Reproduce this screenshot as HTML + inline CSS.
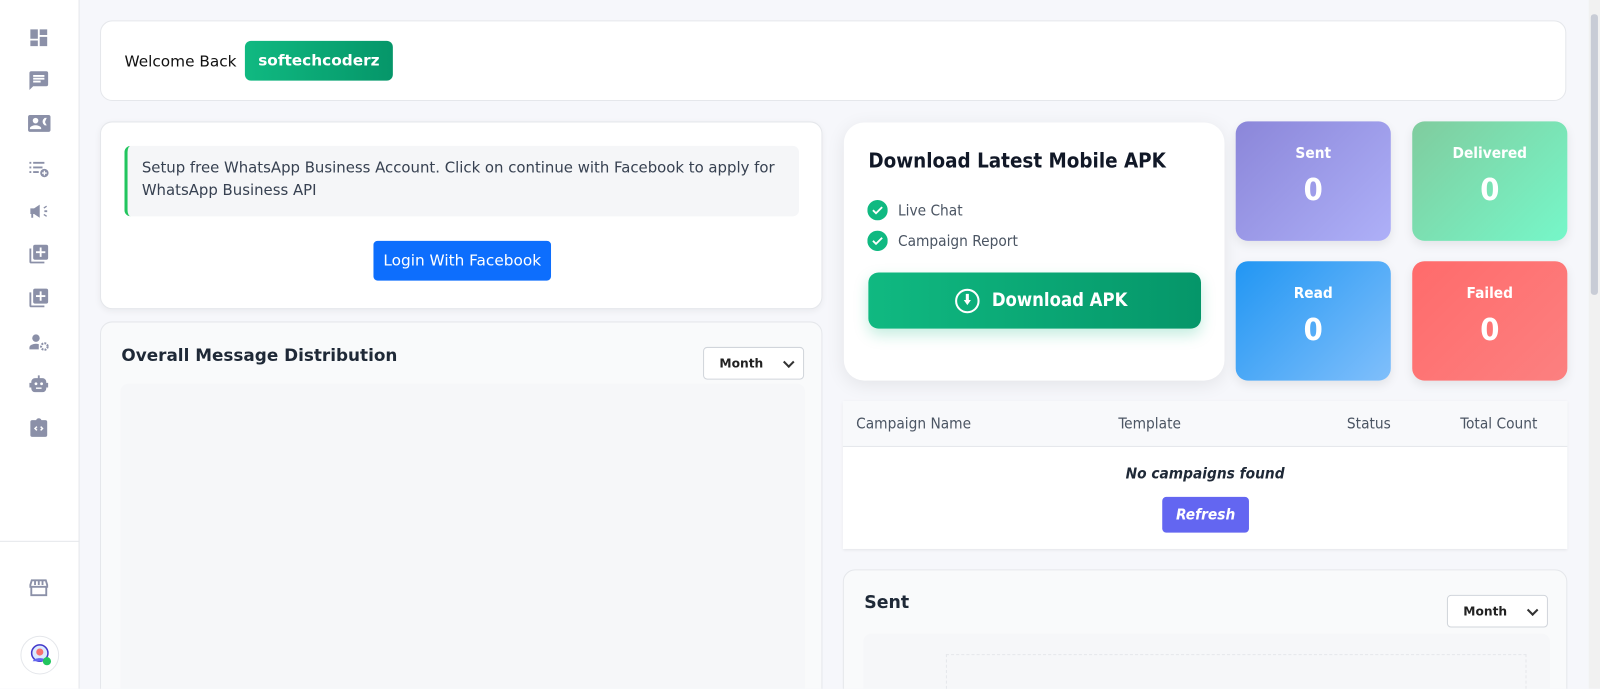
<!DOCTYPE html>
<html><head><style>
*{box-sizing:border-box;margin:0;padding:0}
html,body{width:1600px;height:689px;overflow:hidden}
body{background:#f6f7fb;font-family:"DejaVu Sans","Liberation Sans",sans-serif;color:#1f2937;position:relative}
#c{position:absolute;left:0;top:0;width:1600px;height:689px;overflow:hidden}
#w{position:absolute;left:0;top:0;width:1568px;height:675px;overflow:hidden;transform:scale(1.0204);transform-origin:0 0;background:#f6f7fb}
.abs{position:absolute}
.side{left:0;top:0;width:78px;height:675px;background:#fff;border-right:1px solid #e5e7eb}
.ic{position:absolute;left:27px;width:22px;height:22px}
.card{position:absolute;background:#fff;border:1px solid #e5e7eb;border-radius:12px}
.stat{position:absolute;width:152px;height:117px;border-radius:12px;color:#fff;text-align:center;font-family:"DejaVu Sans Condensed","Liberation Sans Narrow",sans-serif;box-shadow:0 4px 10px rgba(0,0,0,.08)}
.stat .t{margin-top:22px;font-size:15px;font-weight:bold}
.stat .n{margin-top:10px;font-size:30px;font-weight:bold}
.sel{position:absolute;width:99px;height:32px;border:1px solid #d1d5db;border-radius:4px;background:#fff;font-size:12px;font-weight:bold;padding:8px 15px;color:#222}
.sel:after{content:"";position:absolute;right:10px;top:10px;width:6px;height:6px;border-right:2px solid #333;border-bottom:2px solid #333;transform:rotate(45deg)}
</style></head><body><div id="c"><div id="w">
<div class="abs side">
<svg class="ic" style="top:26px" viewBox="0 0 24 24" fill="#8b90a8"><path d="M3 13h8V3H3zm0 8h8v-6H3zm10 0h8V11h-8zm0-18v6h8V3z"/></svg>
<svg class="ic" style="top:68px" viewBox="0 0 24 24" fill="#8b90a8"><path d="M20 2H4a2 2 0 0 0-2 2v18l4-4h14a2 2 0 0 0 2-2V4a2 2 0 0 0-2-2zM6 9h12v2H6zm8 5H6v-2h8zm4-6H6V6h12z"/></svg>
<svg class="ic" style="top:110px;left:26px;width:25px" viewBox="0 0 24 24" fill="#8b90a8"><path d="M22 3H2C.9 3 0 3.9 0 5v14c0 1.1.9 2 2 2h20c1.1 0 2-.9 2-2V5c0-1.1-.9-2-2-2zM8 6a3 3 0 1 1 0 6 3 3 0 0 1 0-6zm6 12H2v-1c0-2 4-3.1 6-3.1s6 1.1 6 3.1zm3.8-4-1.6-1.6a5 5 0 0 1 0-4.8L17.8 6H20l-1.6 3.5a3 3 0 0 0 0 1.8L20 14z"/></svg>
<svg class="ic" style="top:154px" viewBox="0 0 24 24" fill="#8b90a8"><path d="M2 5h2v2H2zm4 0h12v2H6zM2 10h2v2H2zm4 0h10v2H6zM2 15h2v2H2zm4 0h6v2H6z"/><circle cx="18" cy="17" r="4.5"/><path d="M17.3 14.5h1.4v1.8h1.8v1.4h-1.8v1.8h-1.4v-1.8h-1.8v-1.4h1.8z" fill="#fff"/></svg>
<svg class="ic" style="top:196px" viewBox="0 0 24 24" fill="#8b90a8"><path d="M3 9h4l6-4v14l-6-4H6v4H4v-4H3zm14-1 3-2 .8 1.2-3 2zm1 3h3v2h-3zm-1 5 .8-1.2 3 2-.8 1.2z"/></svg>
<svg class="ic" style="top:238px" viewBox="0 0 24 24" fill="#8b90a8"><path d="M4 6H2v14a2 2 0 0 0 2 2h14v-2H4zm16-4H8a2 2 0 0 0-2 2v12a2 2 0 0 0 2 2h12a2 2 0 0 0 2-2V4a2 2 0 0 0-2-2zm-1 9h-4v4h-2v-4H9V9h4V5h2v4h4z"/></svg>
<svg class="ic" style="top:281px" viewBox="0 0 24 24" fill="#8b90a8"><path d="M4 6H2v14a2 2 0 0 0 2 2h14v-2H4zm16-4H8a2 2 0 0 0-2 2v12a2 2 0 0 0 2 2h12a2 2 0 0 0 2-2V4a2 2 0 0 0-2-2zm-1 9h-4v4h-2v-4H9V9h4V5h2v4h4z"/></svg>
<svg class="ic" style="top:324px" viewBox="0 0 24 24" fill="#8b90a8"><circle cx="9" cy="8" r="4"/><path d="M2 20v-2c0-2.5 4-4 7-4 1 0 2 .1 3 .4V20z"/><circle cx="18" cy="17" r="3.5" fill="none" stroke="#8b90a8" stroke-width="2.2" stroke-dasharray="2 1.2"/></svg>
<svg class="ic" style="top:366px" viewBox="0 0 24 24" fill="#8b90a8"><path d="M11 2h2v3h3a4 4 0 0 1 4 4v1h2v5h-2v1a4 4 0 0 1-4 4H8a4 4 0 0 1-4-4v-1H2v-5h2V9a4 4 0 0 1 4-4h3z"/><circle cx="9" cy="11" r="1.5" fill="#fff"/><circle cx="15" cy="11" r="1.5" fill="#fff"/><path d="M9 15h6v1.5H9z" fill="#fff"/></svg>
<svg class="ic" style="top:408px" viewBox="0 0 24 24" fill="#8b90a8"><path d="M19 4h-4.2A3 3 0 0 0 12 2a3 3 0 0 0-2.8 2H5a2 2 0 0 0-2 2v14a2 2 0 0 0 2 2h14a2 2 0 0 0 2-2V6a2 2 0 0 0-2-2z"/><path d="m10 11-2 2 2 2M14 11l2 2-2 2" stroke="#fff" stroke-width="1.6" fill="none"/></svg>
<div class="abs" style="left:0;top:530px;width:78px;border-top:1px solid #e5e7eb"></div>
<svg class="ic" style="top:565px" viewBox="0 0 24 24" fill="none" stroke="#8b90a8" stroke-width="2"><path d="M3 9l1.5-5h15L21 9v2H3zM4 11v9h16v-9M8 4v5M12 4v5M16 4v5"/></svg>
<div class="abs" style="left:20px;top:623px;width:38px;height:38px;border-radius:50%;border:1px solid #e5e7eb;background:#fff"><svg style="position:absolute;left:7px;top:6px" width="24" height="24" viewBox="0 0 24 24"><circle cx="11" cy="10" r="8" fill="#dbeafe" stroke="#4338ca" stroke-width="1.5"/><circle cx="11" cy="9" r="3.5" fill="#f87171"/><path d="M4 18c2-4 12-4 14 0" fill="#6366f1"/><circle cx="18" cy="18" r="4" fill="#22c55e"/></svg></div>
</div>
<div class="abs" style="left:1557px;top:0;width:11px;height:675px;background:#f1f1f1"></div>
<div class="abs" style="left:1559px;top:14px;width:7px;height:275px;background:#c8ccd6;border-radius:3px"></div>

<div class="card" style="left:98px;top:20px;width:1437px;height:79px">
<div class="abs" style="left:23px;top:30px;font-size:15px;color:#111">Welcome Back</div>
<div class="abs" style="left:141px;top:19px;width:145px;height:39px;border-radius:6px;background:linear-gradient(90deg,#10b981,#059669);color:#fff;font-weight:bold;font-size:15px;text-align:center;line-height:39px">softechcoderz</div>
</div>

<div class="card" style="left:98px;top:119px;width:708px;height:184px;box-shadow:0 2px 6px rgba(0,0,0,.05)">
<div class="abs" style="left:23px;top:23px;width:661px;height:69px;background:#f5f6f8;border-left:3px solid #22c55e;border-radius:6px;padding:11px 14px;font-size:14.6px;line-height:22px;color:#374151">Setup free WhatsApp Business Account. Click on continue with Facebook to apply for WhatsApp Business API</div>
<div class="abs" style="left:267px;top:116px;width:174px;height:39px;background:#0d6efd;border-radius:4px;color:#fff;font-size:15px;text-align:center;line-height:39px">Login With Facebook</div>
</div>

<div class="card" style="left:98px;top:315px;width:708px;height:380px;background:#f9fafb">
<div class="abs" style="left:20px;top:23px;font-size:16.5px;font-weight:bold;color:#1f2937">Overall Message Distribution</div>
<div class="sel" style="left:590px;top:24px">Month</div>
<div class="abs" style="left:19px;top:60px;width:671px;height:320px;background:#f6f7f9;border-radius:8px"></div>
</div>

<div class="card" style="left:827px;top:120px;width:373px;height:253px;border:none;border-radius:20px;box-shadow:0 4px 18px rgba(0,0,0,.08);font-family:'DejaVu Sans Condensed','Liberation Sans Narrow',sans-serif">
<div class="abs" style="left:24px;top:25px;font-size:20px;font-weight:bold;color:#111827">Download Latest Mobile APK</div>
<svg class="abs" style="left:23px;top:76px" width="20" height="20" viewBox="0 0 20 20"><circle cx="10" cy="10" r="10" fill="#10b981"/><path d="m5.5 10 3 3 6-6" stroke="#fff" stroke-width="1.8" fill="none"/></svg>
<div class="abs" style="left:53px;top:77px;font-size:15px;color:#4b5563">Live Chat</div>
<svg class="abs" style="left:23px;top:106px" width="20" height="20" viewBox="0 0 20 20"><circle cx="10" cy="10" r="10" fill="#10b981"/><path d="m5.5 10 3 3 6-6" stroke="#fff" stroke-width="1.8" fill="none"/></svg>
<div class="abs" style="left:53px;top:107px;font-size:15px;color:#4b5563">Campaign Report</div>
<div class="abs" style="left:24px;top:147px;width:326px;height:55px;border-radius:10px;background:linear-gradient(90deg,#10b981,#059669);box-shadow:0 6px 14px rgba(16,185,129,.25);color:#fff;font-size:18px;font-weight:bold;line-height:55px;padding-left:121px">Download APK</div>
<svg class="abs" style="left:108px;top:162px" width="26" height="26" viewBox="0 0 26 26"><circle cx="13" cy="13" r="11" fill="none" stroke="#fff" stroke-width="2"/><path d="M9.5 12h7l-3.5 5z M11.5 6h3v6h-3z" fill="#fff"/></svg>
</div>

<div class="stat" style="left:1211px;top:119px;background:linear-gradient(135deg,#8b86d9,#aeb0f8)"><div class="t">Sent</div><div class="n">0</div></div>
<div class="stat" style="left:1384px;top:119px;background:linear-gradient(135deg,#80cc9e,#76f7c9)"><div class="t">Delivered</div><div class="n">0</div></div>
<div class="stat" style="left:1211px;top:256px;background:linear-gradient(135deg,#2196f3,#80bffb)"><div class="t">Read</div><div class="n">0</div></div>
<div class="stat" style="left:1384px;top:256px;background:linear-gradient(135deg,#ff6b6b,#fc8080)"><div class="t">Failed</div><div class="n">0</div></div>

<div class="abs" style="left:826px;top:393px;width:710px;height:145px;background:#fff;box-shadow:0 1px 3px rgba(0,0,0,.08);font-family:'DejaVu Sans Condensed','Liberation Sans Narrow',sans-serif">
<div class="abs" style="left:0;top:0;width:710px;height:45px;background:#f8f9fb;border-bottom:1px solid #e5e7eb;font-size:15px;color:#4b5563">
<span class="abs" style="left:13px;top:13px">Campaign Name</span><span class="abs" style="left:270px;top:13px">Template</span><span class="abs" style="left:494px;top:13px">Status</span><span class="abs" style="left:605px;top:13px">Total Count</span></div>
<div class="abs" style="left:0;top:62px;width:710px;text-align:center;font-size:15px;font-style:italic;font-weight:bold;color:#1f2937">No campaigns found</div>
<div class="abs" style="left:313px;top:94px;width:85px;height:35px;background:#6366f1;border-radius:4px;color:#fff;font-style:italic;font-weight:bold;font-size:15px;text-align:center;line-height:35px">Refresh</div>
</div>

<div class="card" style="left:826px;top:558px;width:710px;height:137px;background:#f9fafb">
<div class="abs" style="left:20px;top:22px;font-size:17px;font-weight:bold">Sent</div>
<div class="sel" style="left:591px;top:24px">Month</div>
<div class="abs" style="left:19px;top:62px;width:673px;height:75px;background:#f6f7f9;border-radius:8px"><div class="abs" style="left:81px;top:20px;width:569px;height:55px;border:1px dashed #e5e7eb"></div></div>
</div>
</div></div></body></html>
